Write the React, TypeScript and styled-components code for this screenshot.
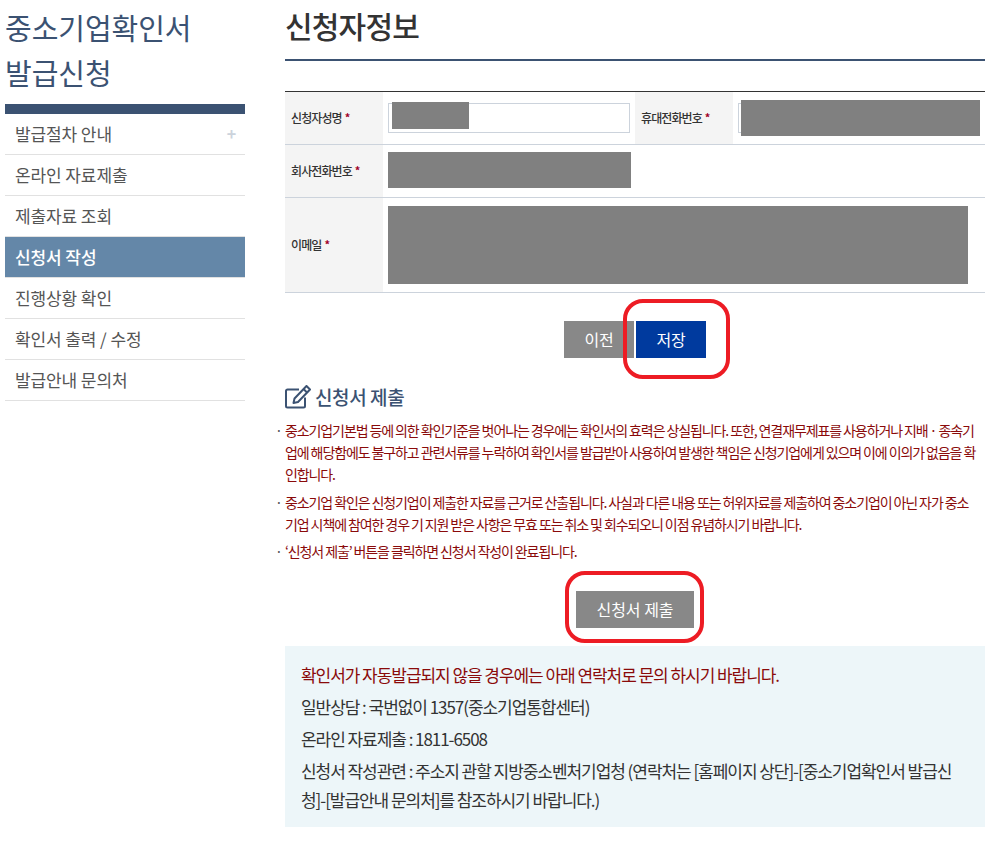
import React from "react";
import styled, { createGlobalStyle } from "styled-components";

const Global = createGlobalStyle`
  html, body { margin: 0; padding: 0; background: #fff; }
  body { font-family: "Noto Sans CJK KR", "Noto Sans", sans-serif; color: #333; }
  * { box-sizing: border-box; }
`;

const Page = styled.div`
  display: flex;
  width: 1004px;
  height: 842px;
  overflow: hidden;
  padding-left: 5px;
`;

const Sidebar = styled.aside`
  width: 240px;
  flex: none;
  margin-right: 40px;
`;

const SideTitle = styled.h2`
  margin: 0;
  padding: 5px 0 9px;
  font-size: 29px;
  line-height: 45px;
  font-weight: 400;
  letter-spacing: -0.05px;
  color: #3b5272;
`;

const Menu = styled.ul`
  list-style: none;
  margin: 0;
  padding: 0;
  border-top: 10px solid #3b5272;
`;

const MenuItem = styled.li<{ $active?: boolean }>`
  display: flex;
  justify-content: space-between;
  align-items: center;
  height: 41px;
  padding: 0 9px 2px 10px;
  font-size: 17px;
  letter-spacing: -0.1px;
  font-weight: ${(p) => (p.$active ? 500 : 400)};
  color: ${(p) => (p.$active ? "#fff" : "#555")};
  background: ${(p) => (p.$active ? "#6487a8" : "#fff")};
  border-bottom: 1px solid #e1e1e1;
`;

const Plus = styled.span`
  color: #ccd3dc;
  font-size: 16px;
  font-weight: 700;
`;

const Main = styled.main`
  width: 700px;
  flex: none;
`;

const Title = styled.h1`
  margin: 0 0 30px;
  height: 61px;
  padding-top: 3px;
  border-bottom: 2px solid #3b5272;
  font-size: 30px;
  line-height: 45px;
  font-weight: 500;
  letter-spacing: -0.8px;
  color: #333;
`;

const FormTable = styled.div`
  display: grid;
  grid-template-columns: 98px 252px 98px 252px;
  grid-template-rows: 53px 53px 95px;
  border-top: 1px solid #333;
`;

const Label = styled.div`
  display: flex;
  align-items: center;
  gap: 3px;
  padding: 0 0 2px 6px;
  background: #f4f4f4;
  border-bottom: 1px solid #ccd3dc;
  font-size: 12px;
  font-weight: 500;
  letter-spacing: -0.9px;
  color: #333;
`;

const Required = styled.span`
  color: #a00028;
  font-size: 11px;
  font-weight: 700;
`;

const Cell = styled.div<{ $span?: number }>`
  display: flex;
  flex-direction: column;
  justify-content: center;
  gap: 14px;
  padding: 0 5px;
  border-bottom: 1px solid #ccd3dc;
  grid-column: span ${(p) => p.$span ?? 1};
`;

const Field = styled.div<{ $width?: number }>`
  position: relative;
  height: 30px;
  width: ${(p) => (p.$width ? `${p.$width}px` : "100%")};
  border: 1px solid #ccd3dc;
  background: #fff;
`;

const Mask = styled.div<{ $l: number; $t: number; $w: number; $h: number }>`
  position: absolute;
  z-index: 1;
  left: ${(p) => p.$l}px;
  top: ${(p) => p.$t}px;
  width: ${(p) => p.$w}px;
  height: ${(p) => p.$h}px;
  background: #808080;
`;

const ButtonRow = styled.div<{ $top: number; $bottom: number }>`
  display: flex;
  justify-content: center;
  gap: 2px;
  margin: ${(p) => p.$top}px 0 ${(p) => p.$bottom}px;
`;

const Highlight = styled.div<{ $l: number; $t: number; $w: number; $h: number }>`
  position: absolute;
  left: ${(p) => p.$l}px;
  top: ${(p) => p.$t}px;
  width: ${(p) => p.$w}px;
  height: ${(p) => p.$h}px;
  border: 4px solid #ed1c24;
  border-radius: 20px;
  pointer-events: none;
`;

const Anchor = styled.div`
  position: relative;
  display: flex;
  gap: 2px;
`;

const Button = styled.button<{ $primary?: boolean; $wide?: boolean }>`
  width: ${(p) => (p.$wide ? 118 : 70)}px;
  height: 37px;
  border: 0;
  padding: 0 0 2px;
  font-family: inherit;
  font-size: 16px;
  letter-spacing: ${(p) => (p.$wide ? 0 : -0.2)}px;
  color: #fff;
  background: ${(p) => (p.$primary ? "#003a9e" : "#888")};
`;

const SectionHead = styled.h3`
  display: flex;
  align-items: center;
  gap: 4px;
  margin: 0 0 9px;
  height: 26px;
  font-size: 19px;
  line-height: 26px;
  font-weight: 500;
  letter-spacing: -0.4px;
  color: #3b5272;
`;

const Notes = styled.ul`
  list-style: none;
  margin: 0 0 0 -8px;
  padding: 0;
`;

const Note = styled.li`
  position: relative;
  padding: 0 7px 0 8px;
  margin-bottom: 6px;
  font-size: 14px;
  line-height: 22px;
  letter-spacing: -1.1px;
  color: #8a0a0a;
  &:nth-child(2) {
    margin-bottom: 5px;
  }
  &::before {
    content: "·";
    position: absolute;
    left: -2px;
    color: #555;
  }
`;

const InfoBox = styled.div`
  height: 181px;
  padding: 14px 16px 0;
  background: #edf6f9;
  font-size: 17px;
  line-height: 29px;
  letter-spacing: -1.05px;
  color: #333;
`;

const InfoLine = styled.p<{ $alert?: boolean }>`
  margin: 0 0 3px;
  color: ${(p) => (p.$alert ? "#8a0a0a" : "#333")};
`;

const EditIcon = () => (
  <svg width="26" height="24" viewBox="0 0 26 24" fill="none" stroke="#3b5272" strokeWidth="2">
    <path d="M20 12.5V21a1.5 1.5 0 0 1-1.5 1.5h-16A1.5 1.5 0 0 1 1 21V6a1.5 1.5 0 0 1 1.5-1.5H14" />
    <path d="M21.5 1l3.5 3.5L13 17l-4.5 1 1-4.5z" strokeLinejoin="round" />
    <path d="M18.5 4l3.5 3.5" />
  </svg>
);

const menu = ["발급절차 안내", "온라인 자료제출", "제출자료 조회", "신청서 작성", "진행상황 확인", "확인서 출력 / 수정", "발급안내 문의처"];

export default function App() {
  return (
    <>
      <Global />
      <Page>
        <Sidebar>
          <SideTitle>
            중소기업확인서
            <br />
            발급신청
          </SideTitle>
          <Menu>
            {menu.map((m, i) => (
              <MenuItem key={m} $active={i === 3}>
                {m}
                {i === 0 && <Plus>+</Plus>}
              </MenuItem>
            ))}
          </Menu>
        </Sidebar>
        <Main>
          <Title>신청자정보</Title>
          <FormTable>
            <Label>
              신청자성명 <Required>*</Required>
            </Label>
            <Cell>
              <Field $width={242}>
                <Mask $l={3} $t={-2} $w={77} $h={27} />
              </Field>
            </Cell>
            <Label>
              휴대전화번호 <Required>*</Required>
            </Label>
            <Cell>
              <Field $width={242}>
                <Mask $l={2} $t={-4} $w={239} $h={36} />
              </Field>
            </Cell>
            <Label>
              회사전화번호 <Required>*</Required>
            </Label>
            <Cell $span={3}>
              <Field $width={242}>
                <Mask $l={-1} $t={-5} $w={243} $h={36} />
              </Field>
            </Cell>
            <Label>
              이메일 <Required>*</Required>
            </Label>
            <Cell $span={3}>
              <Field $width={242}>
                <Mask $l={-1} $t={-3} $w={580} $h={78} />
              </Field>
              <Field $width={242} />
            </Cell>
          </FormTable>
          <ButtonRow $top={28} $bottom={26}>
            <Anchor>
              <Button>이전</Button>
              <Button $primary>저장</Button>
              <Highlight $l={59} $t={-22} $w={107} $h={80} />
            </Anchor>
          </ButtonRow>
          <SectionHead>
            <EditIcon />
            신청서 제출
          </SectionHead>
          <Notes>
            <Note>
              중소기업기본법 등에 의한 확인기준을 벗어나는 경우에는 확인서의 효력은 상실됩니다. 또한, 연결재무제표를 사용하거나 지배 · 종속기업에 해당함에도 불구하고 관련서류를 누락하여 확인서를 발급받아 사용하여 발생한 책임은 신청기업에게 있으며 이에 이의가 없음을 확인합니다.
            </Note>
            <Note>
              중소기업 확인은 신청기업이 제출한 자료를 근거로 산출됩니다. 사실과 다른 내용 또는 허위자료를 제출하여 중소기업이 아닌 자가 중소기업 시책에 참여한 경우 기 지원 받은 사항은 무효 또는 취소 및 회수되오니 이점 유념하시기 바랍니다.
            </Note>
            <Note>‘신청서 제출’ 버튼을 클릭하면 신청서 작성이 완료됩니다.</Note>
          </Notes>
          <ButtonRow $top={29} $bottom={18}>
            <Anchor>
              <Button $wide>신청서 제출</Button>
              <Highlight $l={-11} $t={-20} $w={139} $h={72} />
            </Anchor>
          </ButtonRow>
          <InfoBox>
            <InfoLine $alert>확인서가 자동발급되지 않을 경우에는 아래 연락처로 문의 하시기 바랍니다.</InfoLine>
            <InfoLine>일반상담 : 국번없이 1357(중소기업통합센터)</InfoLine>
            <InfoLine>온라인 자료제출 : 1811-6508</InfoLine>
            <InfoLine>신청서 작성관련 : 주소지 관할 지방중소벤처기업청 (연락처는 [홈페이지 상단]-[중소기업확인서 발급신청]-[발급안내 문의처]를 참조하시기 바랍니다.)</InfoLine>
          </InfoBox>
        </Main>
      </Page>
    </>
  );
}
